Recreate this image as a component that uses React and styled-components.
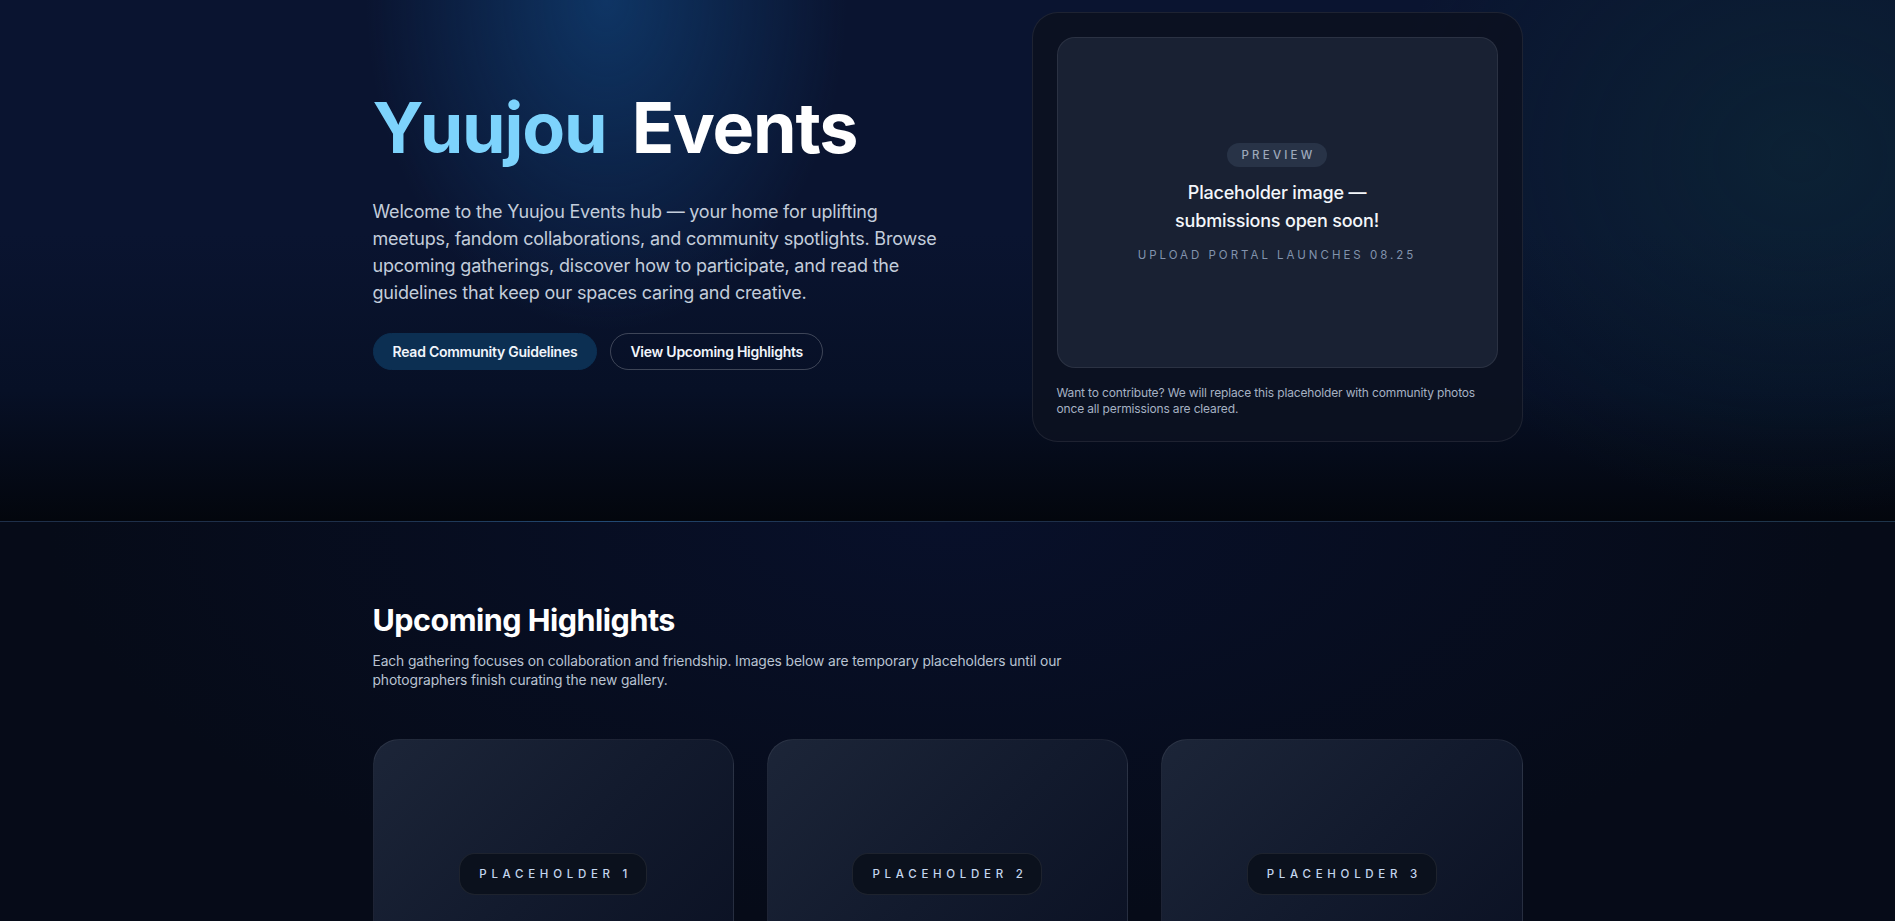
import React from 'react';
import styled, { createGlobalStyle } from 'styled-components';

const GlobalStyle = createGlobalStyle`
  * {
    box-sizing: border-box;
  }
  body {
    margin: 0;
    background: #050a16;
    font-family: Inter, "Noto Sans", "Liberation Sans", sans-serif;
    color: #e6edf7;
    -webkit-font-smoothing: antialiased;
  }
`;

const placeholders = ['Placeholder 1', 'Placeholder 2', 'Placeholder 3'];

const App = () => {
  return (
    <>
      <GlobalStyle />
      <Hero>
        <HeroInner>
          <Intro>
            <Title>
              <Accent>Yuujou</Accent> Events
            </Title>
            <Lead>
              Welcome to the Yuujou Events hub — your home for uplifting meetups, fandom
              collaborations, and community spotlights. Browse upcoming gatherings, discover how
              to participate, and read the guidelines that keep our spaces caring and creative.
            </Lead>
            <Actions>
              <Button $primary>Read Community Guidelines</Button>
              <Button>View Upcoming Highlights</Button>
            </Actions>
          </Intro>
          <PreviewCard>
            <PreviewFrame>
              <PreviewTag>Preview</PreviewTag>
              <PreviewTitle>
                Placeholder image —<br />
                submissions open soon!
              </PreviewTitle>
              <PreviewNote>Upload portal launches 08.25</PreviewNote>
            </PreviewFrame>
            <Caption>
              Want to contribute? We will replace this placeholder with community photos once all
              permissions are cleared.
            </Caption>
          </PreviewCard>
        </HeroInner>
      </Hero>
      <Highlights>
        <Container>
          <SectionTitle>Upcoming Highlights</SectionTitle>
          <SectionText>
            Each gathering focuses on collaboration and friendship. Images below are temporary
            placeholders until our photographers finish curating the new gallery.
          </SectionText>
          <CardGrid>
            {placeholders.map((label) => (
              <EventCard key={label}>
                <CardTag>{label}</CardTag>
              </EventCard>
            ))}
          </CardGrid>
        </Container>
      </Highlights>
    </>
  );
};

const Hero = styled.section`
  padding: 12px 0 79px;
  border-bottom: 1px solid rgba(120, 170, 190, 0.18);
  background:
    radial-gradient(ellipse 240px 330px at 32% 0%, rgba(16, 64, 118, 0.75), transparent 100%),
    radial-gradient(ellipse 420px 360px at 95% 30%, rgba(14, 58, 60, 0.35), transparent 100%),
    linear-gradient(180deg, #0a1430 0%, #0a1430 45%, #071026 75%, #03060d 100%);
`;

const Container = styled.div`
  max-width: 1150px;
  margin: 0 auto;
`;

const HeroInner = styled(Container)`
  display: grid;
  grid-template-columns: 1fr 491px;
  align-items: center;
`;

const Intro = styled.div`
  max-width: 570px;
  padding-top: 5px;
`;

const Title = styled.h1`
  margin: 0 0 32px;
  font-size: 70px;
  line-height: 1.1;
  font-weight: 700;
  letter-spacing: -1.2px;
  color: #ffffff;
`;

const Accent = styled.span`
  color: #7dd3fc;
  margin-right: 10px;
`;

const Lead = styled.p`
  margin: 0 0 27px;
  font-size: 18px;
  line-height: 1.51;
  color: #c3cddb;
  letter-spacing: -0.2px;
`;

const Actions = styled.div`
  display: flex;
  gap: 13px;
`;

const Button = styled.button`
  height: 37px;
  padding: 0 19px;
  border-radius: 999px;
  font-family: inherit;
  font-size: 14px;
  font-weight: 600;
  letter-spacing: -0.25px;
  color: #f1f5fb;
  cursor: pointer;
  background: ${(props) => (props.$primary ? '#0c2f52' : 'transparent')};
  border: 1px solid ${(props) => (props.$primary ? '#0c2f52' : 'rgba(255, 255, 255, 0.22)')};
`;

const PreviewCard = styled.div`
  padding: 24px;
  border-radius: 26px;
  background: rgba(12, 17, 33, 0.92);
  border: 1px solid rgba(255, 255, 255, 0.08);
`;

const PreviewFrame = styled.div`
  height: 331px;
  border-radius: 18px;
  background: #192133;
  border: 1px solid rgba(255, 255, 255, 0.08);
  display: flex;
  flex-direction: column;
  align-items: center;
  justify-content: center;
  text-align: center;
`;

const PreviewTag = styled.span`
  padding: 5px 11px 5px 14px;
  border-radius: 999px;
  background: #283347;
  color: #9ea9bb;
  font-size: 11.5px;
  font-weight: 500;
  letter-spacing: 0.28em;
  text-transform: uppercase;
`;

const PreviewTitle = styled.div`
  margin-top: 12px;
  font-size: 18px;
  line-height: 28px;
  font-weight: 500;
  color: #f3f6fa;
  letter-spacing: -0.2px;
`;

const PreviewNote = styled.div`
  margin-top: 13px;
  font-size: 11.5px;
  letter-spacing: 0.26em;
  text-transform: uppercase;
  color: #8293ad;
`;

const Caption = styled.p`
  margin: 17px 0 0;
  font-size: 12px;
  line-height: 16px;
  color: #a6b1c3;
  letter-spacing: -0.15px;
`;

const Highlights = styled.section`
  padding: 80px 0 80px;
  background: radial-gradient(ellipse 900px 400px at 50% 0%, #08102a, transparent 100%), #060b18;
`;

const SectionTitle = styled.h2`
  margin: 0 0 13px;
  font-size: 30.5px;
  line-height: 1.2;
  font-weight: 700;
  color: #ffffff;
  letter-spacing: -0.5px;
`;

const SectionText = styled.p`
  margin: 0;
  max-width: 720px;
  font-size: 13.8px;
  line-height: 19.5px;
  color: #b9c3d2;
  letter-spacing: -0.1px;
`;

const CardGrid = styled.div`
  margin-top: 48px;
  display: grid;
  grid-template-columns: repeat(3, 1fr);
  gap: 33px;
`;

const EventCard = styled.div`
  aspect-ratio: 4 / 3;
  border-radius: 26px;
  border: 1px solid rgba(255, 255, 255, 0.07);
  background: linear-gradient(135deg, #1c2538 0%, #121a2d 50%, #0a1022 100%);
  display: flex;
  align-items: center;
  justify-content: center;
`;

const CardTag = styled.span`
  padding: 13px 14px 13px 19px;
  border-radius: 16px;
  background: #0b111d;
  border: 1px solid rgba(255, 255, 255, 0.08);
  font-size: 11.5px;
  font-weight: 500;
  letter-spacing: 0.41em;
  text-transform: uppercase;
  color: #c4d6ee;
`;

export default App;
